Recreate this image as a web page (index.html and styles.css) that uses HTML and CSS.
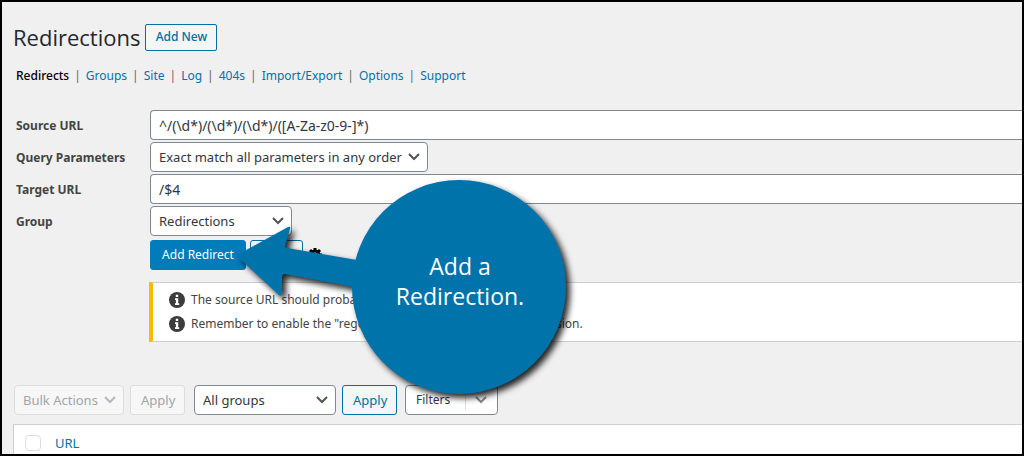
FILE: index.html
```html
<!DOCTYPE html>
<html lang="en">
<head>
<meta charset="utf-8">
<title>Redirections</title>
<link rel="stylesheet" href="styles.css">
</head>
<body>
<main class="page">
  <header class="heading">
    <h1>Redirections</h1>
    <button class="button add-new" type="button">Add New</button>
  </header>

  <nav class="tabs">
    <a class="current" href="#redirects">Redirects</a><span>|</span>
    <a href="#groups">Groups</a><span>|</span>
    <a href="#site">Site</a><span>|</span>
    <a href="#log">Log</a><span>|</span>
    <a href="#404s">404s</a><span>|</span>
    <a href="#import">Import/Export</a><span>|</span>
    <a href="#options">Options</a><span>|</span>
    <a href="#support">Support</a>
  </nav>

  <form class="editor">
    <label for="source">Source URL</label>
    <input id="source" class="field" type="text" value="^/(\d*)/(\d*)/(\d*)/([A-Za-z0-9-]*)">
    <label for="query">Query Parameters</label>
    <select id="query" class="field select query"><option>Exact match all parameters in any order</option></select>
    <label for="target">Target URL</label>
    <input id="target" class="field" type="text" value="/$4">
    <label for="group">Group</label>
    <select id="group" class="field select group"><option>Redirections</option></select>
    <div class="actions">
      <button class="button primary" type="button">Add Redirect</button>
      <button class="button close" type="button">Close</button>
      <button class="gear" type="button" aria-label="Advanced options">
        <svg width="16" height="16" viewBox="0 0 16 16" aria-hidden="true">
          <circle cx="8" cy="8" r="4" fill="none" stroke="currentColor" stroke-width="3"/>
          <path d="M8 1v3M8 12v3M1 8h3M12 8h3M3 3l2 2M11 11l2 2M3 13l2-2M11 5l2-2" stroke="currentColor" stroke-width="3"/>
        </svg>
      </button>
    </div>
    <div class="notice">
      <p>
        <svg class="info" viewBox="0 0 16 16" aria-hidden="true"><circle cx="8" cy="8" r="8" fill="#3c3c3c"/><path d="M6.8 2.8h2.4v2.3H6.8zM6 6.3h3.2v5h1v1.6H5.9v-1.6h1V7.9H6z" fill="#fff"/></svg>
        <span>The source URL should probably start with a /</span>
      </p>
      <p>
        <svg class="info" viewBox="0 0 16 16" aria-hidden="true"><circle cx="8" cy="8" r="8" fill="#3c3c3c"/><path d="M6.8 2.8h2.4v2.3H6.8zM6 6.3h3.2v5h1v1.6H5.9v-1.6h1V7.9H6z" fill="#fff"/></svg>
        <span>Remember to enable the "regex" option if this is a regular expression.</span>
      </p>
    </div>
  </form>

  <div class="toolbar">
    <select class="field select bulk" aria-label="Bulk actions" disabled><option>Bulk Actions</option></select>
    <button class="button apply" type="button" disabled>Apply</button>
    <select class="field select groups" aria-label="Filter by group"><option>All groups</option></select>
    <button class="button apply" type="button">Apply</button>
    <button class="filters" type="button">
      <span>Filters</span>
      <svg width="14" height="8" viewBox="0 0 14 8" aria-hidden="true"><path d="M2 1l5 5 5-5" fill="none" stroke="#888" stroke-width="2"/></svg>
    </button>
  </div>

  <table class="list">
    <thead>
      <tr>
        <th class="check"><input type="checkbox" aria-label="Select all" disabled></th>
        <th><a href="#url">URL</a></th>
      </tr>
    </thead>
  </table>

  <aside class="callout">
    <svg viewBox="0 0 350 240" aria-hidden="true">
      <g fill="#0073aa">
        <circle cx="224" cy="112" r="107"/>
        <path d="M4 79L53 52q3-1 2 2l-5 17q0 2 2 2l70 12 10 27-14 0L50 99q-3 0-3 3v17q-1 3-3 1L4 83q-2-2 0-4z"/>
      </g>
    </svg>
    <p>Add a<br>Redirection.</p>
  </aside>
</main>
</body>
</html>
```
FILE: styles.css
```css
* {
  box-sizing: border-box;
}

body {
  margin: 0;
  background: #f0f0f0;
  color: #444;
  font: 12px/20px "Noto Sans", "Open Sans", sans-serif;
}

.page {
  position: relative;
  display: flex;
  flex-direction: column;
  height: 100vh;
  padding: 20px 0 0 11px;
  border: 2px solid #000;
  overflow: hidden;
}

a {
  color: #0073aa;
  text-decoration: none;
}

button,
input,
select {
  margin: 0;
  font: inherit;
}

.heading {
  display: flex;
  align-items: center;
  gap: 5px;
}

h1 {
  margin: 0;
  color: #23282d;
  font-family: "Open Sans", "Noto Sans", sans-serif;
  font-size: 22px;
  font-weight: 400;
  line-height: 30px;
}

.button {
  height: 30px;
  padding: 0 10px;
  border: 1px solid #0071a1;
  border-radius: 3px;
  background: #f3f5f6;
  color: #0071a1;
  white-space: nowrap;
}

.add-new {
  width: 72px;
  height: 27px;
  padding: 0;
  border-radius: 2px;
  font-weight: 500;
}

.primary {
  width: 96px;
  padding: 0;
  border-color: #007cba;
  background: #007cba;
  color: #fff;
}

.close {
  width: 53px;
  padding: 0;
}

.button:disabled {
  border-color: #ddd;
  background: #f7f7f7;
  color: #a0a5aa;
}

.tabs {
  display: flex;
  gap: 5px;
  margin: 14px 0 24px 3px;
}

.tabs .current {
  color: #000;
  font-weight: 500;
}

.tabs span {
  color: #666;
}

.editor {
  display: grid;
  grid-template-columns: 134px 1fr;
  row-gap: 2px;
  align-items: center;
  padding-left: 3px;
}

.editor label {
  padding-top: 2px;
  color: #444;
  font-weight: 700;
}

.field {
  width: 100%;
  height: 30px;
  padding: 0 8px;
  border: 1px solid #7e8993;
  border-radius: 4px;
  background-color: #fff;
  color: #32373c;
  font-size: 13px;
}

input.field {
  border-right: 0;
  border-radius: 4px 0 0 4px;
  font-size: 14px;
}

.select {
  appearance: none;
  background-image: url("data:image/svg+xml,%3Csvg xmlns='http://www.w3.org/2000/svg' width='12' height='8'%3E%3Cpath d='M1 1l5 5 5-5' fill='none' stroke='%23555' stroke-width='2'/%3E%3C/svg%3E");
  background-position: right 7px center;
  background-repeat: no-repeat;
}

.query {
  width: 278px;
}

.group {
  width: 142px;
}

.actions {
  display: flex;
  grid-column: 2;
  align-items: center;
  gap: 4px;
  margin-top: 2px;
}

.gear {
  display: flex;
  padding: 0;
  border: 0;
  background: none;
  color: #000;
}

.notice {
  grid-column: 2;
  min-height: 60px;
  margin: 10px 0 0 -1px;
  padding: 5px 0 5px 16px;
  border: 1px solid #ccd0d4;
  border-right: 0;
  border-left: 4px solid #ffb900;
  background: #fff;
}

.notice p {
  display: flex;
  align-items: center;
  gap: 6px;
  height: 24px;
  margin: 0;
  white-space: nowrap;
}

.info {
  width: 16px;
  height: 16px;
}

.toolbar {
  display: flex;
  gap: 6px;
  margin: 43px 0 9px 1px;
}

.bulk {
  width: 110px;
}

.bulk:disabled {
  border-color: #ddd;
  background-color: #f7f7f7;
  color: #a0a5aa;
  opacity: 1;
  background-image: url("data:image/svg+xml,%3Csvg xmlns='http://www.w3.org/2000/svg' width='12' height='8'%3E%3Cpath d='M1 1l5 5 5-5' fill='none' stroke='%23b4b9be' stroke-width='2'/%3E%3C/svg%3E");
}

.apply {
  width: 55px;
  font-size: 13px;
}

.groups {
  width: 142px;
  margin-left: 3px;
}

.filters {
  display: flex;
  align-items: center;
  width: 93px;
  height: 30px;
  margin-left: 2px;
  padding: 0 8px 0 10px;
  border: 1px solid #7e8993;
  border-radius: 4px;
  background: #fff;
  color: #32373c;
}

.filters span {
  width: 50px;
  border-right: 1px solid #ddd;
  text-align: left;
}

.filters svg {
  margin-left: 8px;
}

.list {
  width: 100%;
  border: 1px solid #ccd0d4;
  border-right: 0;
  border-bottom: 0;
  border-spacing: 0;
  background: #fff;
}

.list th {
  height: 36px;
  padding: 0;
  font-size: 13px;
  font-weight: 400;
  text-align: left;
}

.list .check {
  width: 41px;
  padding-left: 11px;
}

.check input {
  display: block;
  width: 16px;
  height: 16px;
  border: 1px solid #ddd;
  border-radius: 4px;
  background: #fff;
  appearance: none;
}

.callout {
  position: absolute;
  top: 173px;
  left: 233px;
  width: 350px;
  height: 240px;
}

.callout svg {
  display: block;
  width: 100%;
  height: 100%;
  filter: drop-shadow(4px 4px 3px rgba(0, 0, 0, 0.85));
}

.callout p {
  position: absolute;
  top: 76px;
  left: 118px;
  width: 214px;
  margin: 0;
  color: #fff;
  font-family: "Open Sans", "Noto Sans", sans-serif;
  font-size: 23px;
  line-height: 30px;
  text-align: center;
}
```
